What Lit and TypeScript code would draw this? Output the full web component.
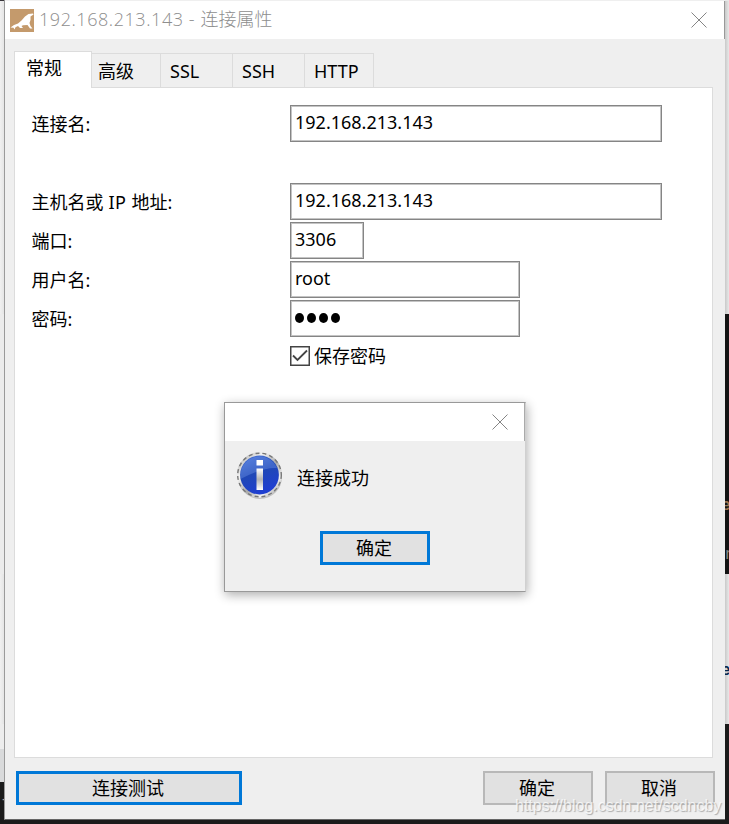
import { LitElement, html, css } from "lit";
import { customElement } from "lit/decorators.js";

const closeIcon = html`<svg width="16" height="16" viewBox="0 0 16 16"><path d="M.5 .5L15.5 15.5M15.5 .5L.5 15.5" stroke="#858585" stroke-width="1"/></svg>`;

const sealIcon = html`<svg width="24" height="23" viewBox="0 0 24 23"><rect width="24" height="23" fill="#c49a6c"/><path d="M.5 18.500L4 16L8 14.500L11.500 11.500L15 7.500L18.500 5L23 4.500L23.500 5.500L20.500 7.500L20.500 11L19.500 14L20.500 17L22.500 19.500L20 19.500L17.500 16L13 16.200L11.500 17L13 19L10 19L8 17L5.500 18.200L4.500 20.500L3.500 18.800Z" fill="#fff"/></svg>`;

const infoIcon = html`<svg width="48" height="50" viewBox="0 0 48 50">
<defs><linearGradient id="ring" x1="0" y1="0" x2="1" y2="1"><stop offset="0" stop-color="#999"/><stop offset=".3" stop-color="#f4f4f4"/><stop offset=".55" stop-color="#aaa"/><stop offset=".75" stop-color="#f2f2f2"/><stop offset="1" stop-color="#777"/></linearGradient>
<linearGradient id="ball" x1="0" y1="0" x2=".4" y2="1"><stop offset="0" stop-color="#4a76da"/><stop offset=".5" stop-color="#2048b4"/><stop offset="1" stop-color="#1f3fd0"/></linearGradient>
<linearGradient id="stem" x1="0" y1="0" x2="0" y2="1"><stop offset="0" stop-color="#fff"/><stop offset=".5" stop-color="#b4b4b4"/><stop offset="1" stop-color="#fff"/></linearGradient></defs>
<ellipse cx="25" cy="27" rx="22" ry="22" fill="#c2c2c2"/><circle cx="24.500" cy="25" r="22.700" fill="url(#ring)"/><circle cx="24.500" cy="25" r="21.800" fill="none" stroke="#777" stroke-width="1.400" stroke-dasharray="4 3"/><circle cx="24.500" cy="25" r="19.400" fill="url(#ball)"/>
<path d="M5.500 25A19 19 0 0 1 42 18Q28 17 5.500 29Z" fill="#7ba0f0" opacity=".35"/><rect x="21.500" y="10" width="6.500" height="5.500" fill="#fff"/><rect x="21.500" y="18.500" width="6.500" height="21.500" fill="url(#stem)"/></svg>`;

@customElement("app-root")
export class AppRoot extends LitElement {
  static styles = css`
    :host { display: block; width: 729px; height: 824px; position: relative; overflow: hidden; background: #e8e8e8; color: #000; font: 18px/24px "Noto Sans", "Noto Sans CJK SC", sans-serif; }
    * { box-sizing: border-box; }
    svg { display: block; flex: none; }
    .backdrop { position: absolute; inset: 0; overflow: hidden; display: grid; grid-template-rows: 1px 313px 260px 150px 100px; }
    .top { background: #39363b; width: 708px; }
    .dark { background: linear-gradient(90deg, #ececec 4px, #141414 4px); }
    .light { background: linear-gradient(90deg, #f0f0f0, #e2e2e2 5px, #c9c9c9 725px, #e8e8e8); }
    .bottom { background: #1b1b1b; position: relative; }
    .leftstrip { position: absolute; left: 0; top: 0; width: 5px; height: 58px; background: #d9dadb; border-top: 25px solid #ededed; }
    .peek { position: absolute; font: 16px/20px "Liberation Mono", monospace; width: 4px; overflow: hidden; left: 725px; }
    .peek b { display: block; margin-left: -4px; }
    .p1 { top: 496px; color: #9d7651; }
    .p2 { top: 545px; color: #888; }
    .p3 { top: 661px; color: #07284f; }
    .p4 { top: 790px; left: 0; color: #b7a099; }
    .window { position: relative; margin-left: 4px; width: 721px; height: 820px; padding-top: 1px; border-left: 1px solid #9a9a9a; border-bottom: 1px solid #666; background: #efefef; display: flex; flex-direction: column; }
    .title { height: 38px; background: #fff; display: flex; align-items: center; padding: 0 17px 0 5px; margin-right: 1px; box-shadow: 1px 0 #999; color: #8e8e8e; flex: none; }
    .title span { flex: 1; padding: 0 0 2px 5px; font-family: "Open Sans", "Noto Sans CJK SC", sans-serif; font-weight: 300; white-space: nowrap; }
    .title em { font-style: normal; letter-spacing: .56px; }
    .tabs { display: flex; align-items: flex-end; height: 37px; margin: 12px 0 -1px 9px; position: relative; flex: none; }
    .tab { height: 35px; border: 1px solid #dcdcdc; border-left: 0; display: flex; padding: 5px 0 0 9px; width: 72px; }
    .tab.on { height: 37px; width: 78px; background: #fff; border-left: 1px solid #dcdcdc; border-bottom: 0; padding: 4px 0 0 11px; }
    .tab.t2 { width: 69px; padding-left: 6px; }
    .tab.t5 { width: 69px; }
    .panel { height: 671px; margin: 0 12px 0 9px; border: 1px solid #dcdcdc; background: #fff; padding: 17px 0 0 17px; flex: none; }
    .row { display: grid; grid-template-columns: 258px auto; height: 39px; align-items: start; justify-content: start; }
    .row.gap { height: 78px; }
    .row label { padding-top: 7px; margin-left: -.5px; white-space: nowrap; }
    .row label em { font-style: normal; letter-spacing: .4px; }
    .field { height: 37px; border: 1px solid #858585; box-shadow: inset 0 0 0 1px #c4c4c4; padding: 4px 0 0 4px; width: 230px; white-space: nowrap; }
    .field.wide { width: 372px; }
    .field.port { width: 74px; }
    .field.dots { display: flex; gap: 3px; padding-top: 12px; }
    .dots i { width: 9px; height: 10px; border-radius: 50%; background: #000; }
    .check { display: flex; align-items: center; gap: 4px; margin: 5px 0 0 258px; height: 24px; }
    .footer { display: flex; gap: 12px; padding: 13px 10px 0 11px; }
    .btn { height: 34px; width: 110px; border: 2px solid #b8b8b8; background: #e1e1e1; display: flex; justify-content: center; align-items: center; white-space: nowrap; padding-right: 2px; }
    .btn.blue { border: 3px solid #0078d7; }
    .test { width: 226px; margin-right: auto; }
    .dialog { position: absolute; left: 224px; top: 402px; width: 302px; height: 190px; background: #efefef; border: 1px solid #999; border-right: 1px solid #d0d0d0; box-shadow: 1px 3px 10px rgba(0,0,0,.32); }
    .dtitle { height: 38px; background: #fff; display: flex; align-items: center; justify-content: flex-end; padding-right: 16px; border-right: 1px solid #aaa; }
    .body { display: flex; padding: 9px 0 0 10px; height: 90px; }
    .body span { padding: 16px 0 0 14px; }
    .dialog .btn { margin-left: 95px; }
    .mark { position: absolute; left: 515px; top: 796px; font: 16px/20px "Liberation Sans", Arial, sans-serif; color: rgba(255,255,255,.75); text-shadow: 1px 1px 1px #aaa; white-space: nowrap; }
  `;

  private row(label: unknown, value: unknown, size = "", gap = false) {
    return html`<div class="row ${gap ? "gap" : ""}"><label>${label}</label><div class="field ${size}">${value}</div></div>`;
  }

  render() {
    return html`
      <div class="backdrop"><div class="top"></div><div class="light"></div><div class="dark"></div><div class="light"></div><div class="bottom"><div class="leftstrip"></div></div></div>
      <span class="peek p1"><b>e</b></span><span class="peek p2">n</span><span class="peek p3"><b>e</b></span><span class="peek p4">-</span>
      <div class="window">
        <div class="title">${sealIcon}<span><em>192.168.213.143 - </em>连接属性</span>${closeIcon}</div>
        <div class="tabs">
          <div class="tab on">常规</div><div class="tab t2">高级</div><div class="tab">SSL</div><div class="tab">SSH</div><div class="tab t5">HTTP</div>
        </div>
        <div class="panel">
          ${this.row("连接名:", "192.168.213.143", "wide", true)}
          ${this.row(html`主机名或<em> IP </em>地址:`, "192.168.213.143", "wide")}
          ${this.row("端口:", "3306", "port")}
          ${this.row("用户名:", "root")}
          ${this.row("密码:", html`<i></i><i></i><i></i><i></i>`, "dots")}
          <div class="check"><svg width="20" height="20" viewBox="0 0 20 20"><rect x=".75" y=".75" width="18.500" height="18.500" fill="#fff" stroke="#444" stroke-width="1.500"/><path d="M3 9.500L7.500 14L17 4.500" fill="none" stroke="#444" stroke-width="1.800"/></svg>保存密码</div>
        </div>
        <div class="footer"><div class="btn blue test">连接测试</div><div class="btn">确定</div><div class="btn">取消</div></div>
      </div>
      <div class="dialog"><div class="dtitle">${closeIcon}</div><div class="body">${infoIcon}<span>连接成功</span></div><div class="btn blue">确定</div></div>
      <div class="mark">https://blog.csdn.net/scdncby</div>
    `;
  }
}
